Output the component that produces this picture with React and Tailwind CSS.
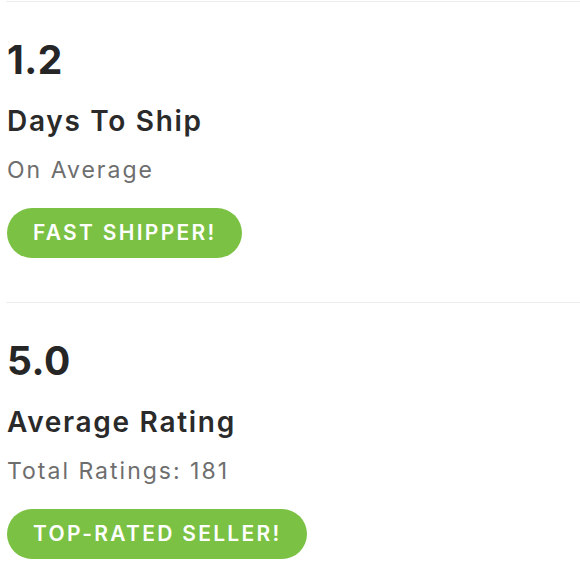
import React from "react";

const stats = [
  { value: "1.2", title: "Days To Ship", sub: "On Average", badge: "FAST SHIPPER!" },
  { value: "5.0", title: "Average Rating", sub: "Total Ratings: 181", badge: "TOP-RATED SELLER!" },
];

export default function App() {
  return (
    <div className="min-h-screen bg-white pt-px font-['Inter',sans-serif]">
      {stats.map((s) => (
        <div key={s.value} className="ml-[6px] border-t border-[#ececec] pt-[38px] pb-[44px] pl-px">
          <div className="text-[39px] leading-[40px] font-bold tracking-[0.5px] text-[#262626]">{s.value}</div>
          <div className="mt-[25px] text-[28px] leading-[32px] font-semibold tracking-[1.7px] text-[#2a2a2a]">
            {s.title}
          </div>
          <div className="mt-[19px] text-[23px] leading-[28px] tracking-[2px] text-[#6e6e6e]">{s.sub}</div>
          <div className="mt-[24px]">
            <span className="inline-flex h-[50px] items-center rounded-full bg-[#7bc143] pl-[26px] pr-[25px] text-[21px] font-semibold tracking-[2.3px] text-white">
              {s.badge}
            </span>
          </div>
        </div>
      ))}
    </div>
  );
}
